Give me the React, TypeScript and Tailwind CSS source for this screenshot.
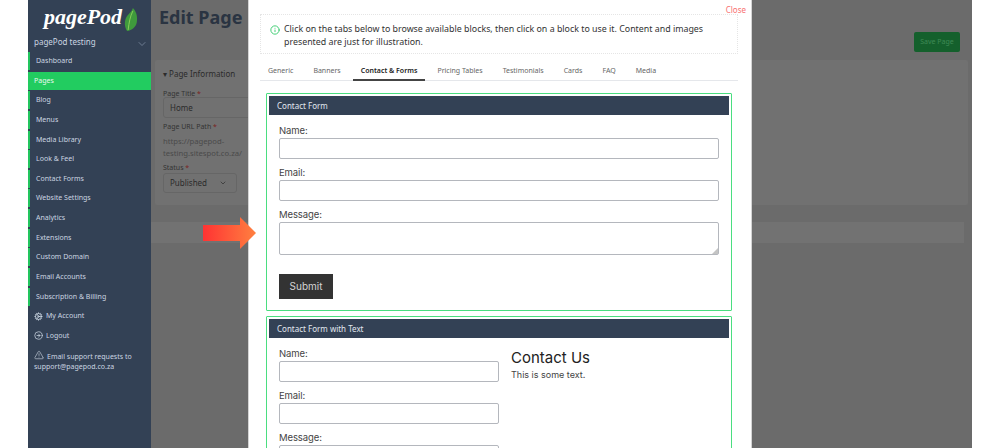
import React, { JSX } from 'react';
import { ChevronDown, Cog, CircleArrowRight, TriangleAlert, Info } from 'lucide-react';

const NAV_ITEMS = [
  'Dashboard',
  'Pages',
  'Blog',
  'Menus',
  'Media Library',
  'Look & Feel',
  'Contact Forms',
  'Website Settings',
  'Analytics',
  'Extensions',
  'Custom Domain',
  'Email Accounts',
  'Subscription & Billing',
];

const TABS = ['Generic', 'Banners', 'Contact & Forms', 'Pricing Tables', 'Testimonials', 'Cards', 'FAQ', 'Media'];

const noto = "font-['Noto_Sans',sans-serif]";
const form = "font-['Inter',sans-serif]";

const Sidebar = (): JSX.Element => (
  <aside className="flex h-full w-[123px] shrink-0 flex-col bg-[#334155] text-[#cbd5e1]">
    <div className="flex h-[32px] items-center justify-center gap-[2px] pl-[3px] pt-[1px]">
      <span className="font-['Liberation_Serif',serif] text-[22px] leading-none font-bold italic text-white">pagePod</span>
      <svg width="14" height="23" viewBox="0 0 14 24" className="mt-[5px]">
        <path d="M9 0C13 4 14 10 13 15C12 20 8 23 3 24C0 20 0 14 2 10C4 6 8 4 9 0Z" fill="#3f9a3c" />
        <path d="M9 3C6 9 5 15 4 23" stroke="#8bcf5a" strokeWidth="1" fill="none" />
      </svg>
    </div>
    <div className="flex h-[20px] items-center justify-between pl-[6px] pr-[3px] text-[8px]">
      <span>pagePod testing</span>
      <ChevronDown size={12} strokeWidth={1.2} className="mt-[3px] text-[#94a3b8]" />
    </div>
    <nav className="flex flex-col gap-[1.65px] text-[7px] leading-[18px]">
      {NAV_ITEMS.map((item) =>
        item === 'Pages' ? (
          <div key={item} className="h-[18px] bg-[#22cc60] pl-[6px] text-[#e8f8ee]">
            {item}
          </div>
        ) : (
          <div key={item} className="h-[18px] border-l-2 border-[#22c55e] pl-[6px]">
            {item}
          </div>
        ),
      )}
      <div className="flex h-[18px] items-center gap-[3px] pl-[6px]">
        <Cog size={9} />
        My Account
      </div>
      <div className="flex h-[18px] items-center gap-[3px] pl-[6px]">
        <CircleArrowRight size={9} />
        Logout
      </div>
      <div className="pl-[6px] leading-[10px] pt-[3px]">
        <TriangleAlert size={10} strokeWidth={1.5} className="mr-[3px] inline align-[-1px]" />
        Email support requests to
        <br />
        support@pagepod.co.za
      </div>
    </nav>
  </aside>
);

const PageBehind = (): JSX.Element => (
  <div className="h-full flex-1 bg-[#6b6b6b]">
    <div className="flex h-[60px] items-start justify-between pl-[8px] pr-[12px]">
      <h1 className="pt-[3px] text-[18px] leading-[28px] font-bold text-[#2a3442]">Edit Page</h1>
      <div className="mt-[32px] flex h-[20px] w-[46px] items-center justify-center rounded-[2px] bg-[#14602c] text-[7px] text-[#3f8a55]">
        Save Page
      </div>
    </div>
    <section className="ml-[4px] mr-[4px] h-[145px] rounded-[2px] bg-[#717171] pl-[8px] pt-[9px] text-[#2b2b2b]">
      <div className="text-[8px] leading-[10px]">▾ Page Information</div>
      <div className="mt-[10px] text-[7px] leading-[9px] text-[#333333]">
        Page Title <span className="text-[#7a2222]">*</span>
      </div>
      <div className="-mt-[1px] h-[21px] w-[120px] rounded-[3px] border border-[#666666] pl-[6px] text-[8px] leading-[19px]">
        Home
      </div>
      <div className="mt-[4px] text-[7px] leading-[9px] text-[#333333]">
        Page URL Path <span className="text-[#7a2222]">*</span>
      </div>
      <div className="mt-[4px] text-[7.7px] leading-[12px] text-[#4a4a4a]">
        https://pagepod-
        <br />
        testing.sitespot.co.za/
      </div>
      <div className="mt-[4px] text-[7px] leading-[9px] text-[#333333]">
        Status <span className="text-[#7a2222]">*</span>
      </div>
      <div className="mt-[1px] flex h-[20px] w-[74px] items-center justify-between rounded-[3px] border border-[#666666] pl-[6px] pr-[9px] text-[8px]">
        Published
        <ChevronDown size={8} />
      </div>
    </section>
    <div className="mt-[17px] mr-[8px] h-[21px] bg-[#727272]" />
  </div>
);

const Field = ({ label, className }: { label: string; className: string }): JSX.Element => (
  <div>
    <div className="text-[9.5px] leading-[14px] tracking-[-0.1px] text-[#444444]">{label}</div>
    <div className={`rounded-[2px] border border-[#b4b7bd] bg-white ${className}`} />
  </div>
);

const BlockHeader = ({ title }: { title: string }): JSX.Element => (
  <div className={`${noto} h-[19px] bg-[#334155] pl-[8px] text-[8px] leading-[19px] text-[#e2e8f0]`}>{title}</div>
);

const BlockModal = (): JSX.Element => (
  <div className={`${noto} absolute top-0 bottom-0 left-[248px] w-[504px] overflow-hidden border-x border-[#d4d4d4] bg-white`}>
    <span className="absolute top-[4px] right-[5px] text-[8px] text-[#f87171]">Close</span>
    <div className="px-[11px] pt-[14px]">
      <div className="flex h-[40px] w-[478px] gap-[4px] border border-dotted border-[#e5e5e5] pl-[9px] pt-[8px] text-[8.85px] leading-[13px] text-[#333333]">
        <Info size={10} className="mt-[2px] shrink-0 text-[#22c55e]" />
        <p>
          Click on the tabs below to browse available blocks, then click on a block to use it. Content and images
          <br />
          presented are just for illustration.
        </p>
      </div>
      <div className="mt-[9px] flex h-[18px] w-[478px] gap-[20px] border-b border-[#e5e7eb] pl-[8px] text-[7px] leading-[16px] text-[#666666]">
        {TABS.map((tab) =>
          tab === 'Contact & Forms' ? (
            <span key={tab} className="-mx-[8px] h-[18px] border-b-2 border-[#444444] px-[8px] font-semibold text-[#222222]">
              {tab}
            </span>
          ) : (
            <span key={tab}>{tab}</span>
          ),
        )}
      </div>
      <div className={`${form} mt-[12px] ml-[6px] flex w-[466px] flex-col gap-[5px]`}>
        <div className="h-[218px] rounded-[1px] border border-[#4ade80] p-[2px]">
          <BlockHeader title="Contact Form" />
          <div className="flex flex-col gap-[7px] px-[10px] pt-[9px]">
            <Field label="Name:" className="h-[21px] w-[440px]" />
            <Field label="Email:" className="h-[21px] w-[440px]" />
            <div>
              <div className="text-[9.5px] leading-[14px] tracking-[-0.1px] text-[#444444]">Message:</div>
              <div className="relative h-[33px] w-[440px] rounded-[2px] border border-[#b4b7bd]">
                <svg width="6" height="6" viewBox="0 0 6 6" className="absolute right-0 bottom-0">
                  <path d="M6 0V6H0Z" fill="#c4c4c4" />
                </svg>
              </div>
            </div>
            <div className="mt-[12px] flex h-[25px] w-[54px] items-center justify-center bg-[#333333] text-[10px] text-[#d4d4d4]">
              Submit
            </div>
          </div>
        </div>
        <div className="h-[200px] rounded-[1px] border border-[#4ade80] p-[2px]">
          <BlockHeader title="Contact Form with Text" />
          <div className="flex gap-[12px] px-[10px] pt-[9px]">
            <div className="flex flex-col gap-[7px]">
              <Field label="Name:" className="h-[21px] w-[220px]" />
              <Field label="Email:" className="h-[21px] w-[220px]" />
              <Field label="Message:" className="h-[33px] w-[220px]" />
            </div>
            <div>
              <div className="text-[15px] leading-[22px] text-[#222222]">Contact Us</div>
              <div className="text-[9px] leading-[11px] text-[#444444]">This is some text.</div>
            </div>
          </div>
        </div>
      </div>
    </div>
  </div>
);

const Arrow = (): JSX.Element => (
  <svg width="54" height="32" viewBox="0 0 54 32" className="absolute top-[217px] left-[203px]">
    <defs>
      <linearGradient id="arrowFill" x1="0" x2="1" y1="0" y2="0">
        <stop offset="0" stopColor="#ff3333" />
        <stop offset="1" stopColor="#ff8040" />
      </linearGradient>
    </defs>
    <path d="M0 8H37V0L53 16L37 32V24H0Z" fill="url(#arrowFill)" />
  </svg>
);

const App = (): JSX.Element => (
  <div className={`${noto} relative h-[448px] w-[1000px] overflow-hidden bg-white`}>
    <div className="ml-[28px] flex h-full w-[944px]">
      <Sidebar />
      <PageBehind />
    </div>
    <BlockModal />
    <Arrow />
  </div>
);

export default App;
